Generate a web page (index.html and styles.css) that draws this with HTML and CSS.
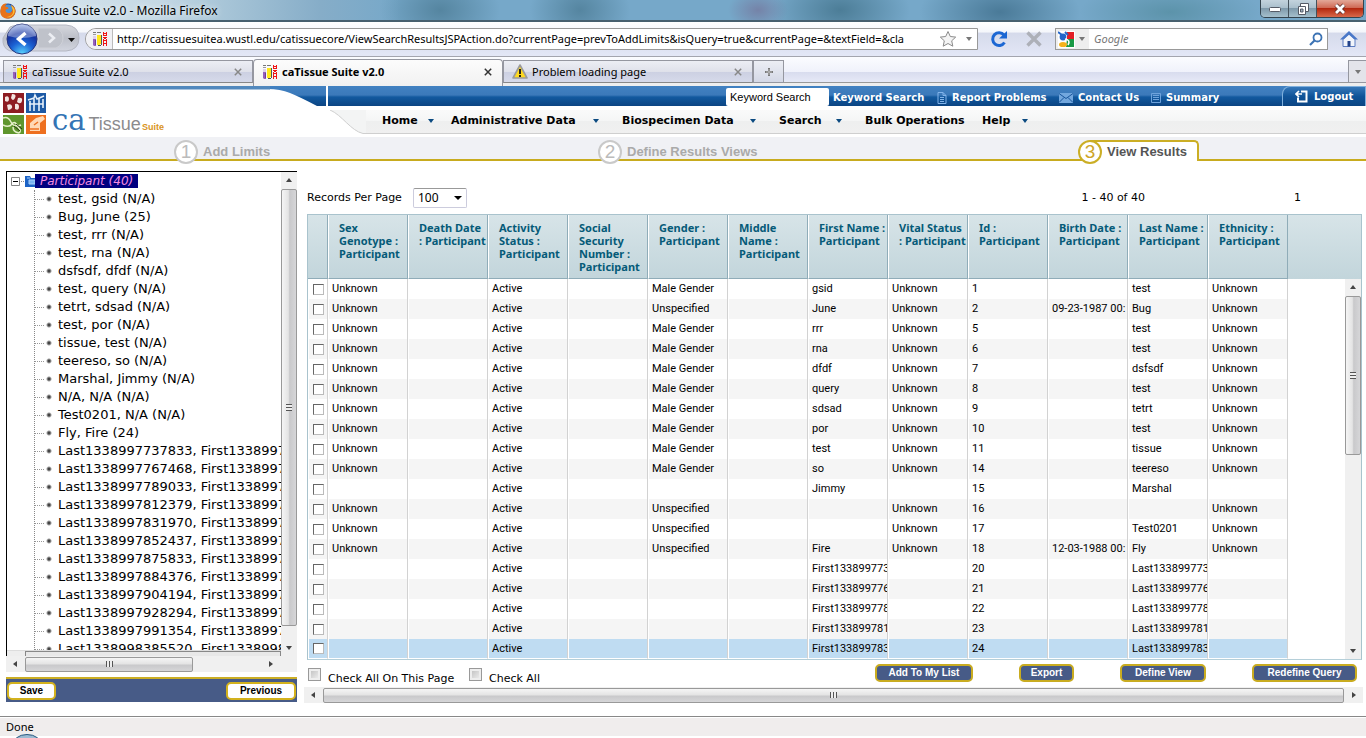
FILE: index.html
```html
<!DOCTYPE html>
<html lang="en">
<head>
<meta charset="utf-8">
<title>caTissue Suite v2.0</title>
<link rel="stylesheet" href="styles.css">
</head>
<body>
<svg class="defs" width="0" height="0" aria-hidden="true">
  <symbol id="tubes" viewBox="0 0 16 16">
    <path d="M1 1.500h3M5 1.500h4" stroke="#777"/><path d="M1 3.500h3" stroke="#999"/>
    <path d="M1 5h3v3h-3z" fill="#ddd0ea"/><path d="M1 8h3v7h-2l-1-1z" fill="#9460bb"/><path d="M3 9h1v5h-1z" fill="#6e3d96"/>
    <path d="M5 4h4v9h-1v1h-3z" fill="#ffe81a"/><path d="M9 4h1v10h-1v1h-3v-1h3z" fill="#555"/>
    <path d="M11 1h1v4h-1zM14 1h1v4h-1zM12 2h2v1h-2zM12 4h2v1h-2zM11 6h4v1h-4zM11 8h1v7h-1zM14 8h1v7h-1zM12 9h2v1h-2zM12 12h2v1h-2zM12 6h2v2h-2z" fill="#f01515"/>
  </symbol>
  <symbol id="cross" viewBox="0 0 8 8"><path d="M.8.8l6.400 6.400M7.200.8l-6.400 6.400" stroke="currentColor" stroke-width="1.500"/></symbol>
  <symbol id="down" viewBox="0 0 6 4"><path d="M0 0h6l-3 4z" fill="currentColor"/></symbol>
  <symbol id="up" viewBox="0 0 6 4"><path d="M0 4h6l-3-4z" fill="currentColor"/></symbol>
  <symbol id="left" viewBox="0 0 4 6"><path d="M4 0v6l-4-3z" fill="currentColor"/></symbol>
  <symbol id="right" viewBox="0 0 4 6"><path d="M0 0v6l4-3z" fill="currentColor"/></symbol>
</svg>

<header class="titlebar">
  <svg class="fox" width="16" height="16" viewBox="0 0 16 16"><circle cx="8" cy="8" r="7.500" fill="#1f4a94"/><circle cx="8" cy="6" r="4.500" fill="#4d93d6"/><path d="M1 4c2-4 5-4 6-3-2 1-2 2-1 3 2 0 3 1 2 2-2 0-3 1-2 3 2 2 5 1 6-1 1-3 0-4-1-6 3 1 5 4 4.500 7-1 5-5 7-9 6.500C2 15-.5 11 .5 7z" fill="#e8731a"/><path d="M11 2c3 2 4 5 3.500 7-1 4-5 6-8 5 5 0 8-4 6-8z" fill="#fbc43a"/></svg>
  <span class="caption">caTissue Suite v2.0 - Mozilla Firefox</span>
  <span class="winbtns">
    <button aria-label="Minimize"><svg width="14" height="8" viewBox="0 0 14 8"><rect x="1.500" y="2.500" width="11" height="4" rx="1" fill="#fff" stroke="#555b66"/></svg></button>
    <button aria-label="Restore"><svg width="14" height="14" viewBox="0 0 14 14"><path d="M4.500 1.500h8v8h-8z" fill="#fff" stroke="#555b66"/><path d="M2.500 4.500h7v8h-7z" fill="#fff" stroke="#555b66"/><path d="M4.500 7h2.500v3h-2.500z" fill="#9fb0c0" stroke="#555b66"/></svg></button>
    <button class="close" aria-label="Close"><svg width="14" height="12" viewBox="0 0 14 12"><path d="M3 2l8 8M11 2l-8 8" stroke="#5b2d2a" stroke-width="4.400"/><path d="M3 2l8 8M11 2l-8 8" stroke="#fff" stroke-width="2.800"/></svg></button>
  </span>
</header>

<div class="navbar">
  <svg width="80" height="32" viewBox="0 0 80 32">
    <defs><radialGradient id="g1" cx=".5" cy="1" r="1"><stop offset="0" stop-color="#5cd8ff"/><stop offset=".4" stop-color="#1b62d4"/><stop offset=".7" stop-color="#1533a0"/><stop offset="1" stop-color="#9cb4ea"/></radialGradient>
    <linearGradient id="g2" x2="0" y2="1"><stop offset="0" stop-color="#d6d8de"/><stop offset=".5" stop-color="#bcbfc8"/><stop offset="1" stop-color="#d2d5df"/></linearGradient></defs>
    <path d="M10 4c4-2 10-2 14-2h42q13 1 13 13t-13 13h-56q-8-3-7-13z" fill="url(#g2)" stroke="#b4b7c2"/>
    <path d="M38 5h18q7 3 7 10t-7 10h-18z" fill="#bfc2ca" stroke="#cfd1d8"/>
    <path d="M49 10.500l5 4.500-5 4.500" stroke="#eceef3" stroke-width="2.500" fill="none"/>
    <circle cx="22" cy="16" r="15" fill="url(#g1)" stroke="#25347c"/><path d="M8 13a14 12 0 0 1 28 0q-14 4-28 0z" fill="#fff" opacity=".35"/>
    <path d="M25.500 10l-7 6 7 6" stroke="#fff" stroke-width="3.400" fill="none"/>
    <path d="M68 15h7l-3.500 4z" fill="#111"/>
  </svg>
  <div class="urlbox">
    <span class="ident"><svg width="16" height="16"><use href="#tubes"/></svg></span>
    <input class="url" aria-label="Address" value="http://catissuesuitea.wustl.edu/catissuecore/ViewSearchResultsJSPAction.do?currentPage=prevToAddLimits&amp;isQuery=true&amp;currentPage=&amp;textField=&amp;cla">
    <svg width="18" height="18" viewBox="0 0 18 18"><path d="M9 1.500l2.300 5 5.400.6-4 3.700 1.100 5.400L9 13.500l-4.800 2.700 1.100-5.400-4-3.700 5.400-.6z" fill="#f4f4f4" stroke="#8b8b8b"/></svg>
    <svg class="gray" width="6" height="4"><use href="#down"/></svg>
  </div>
  <svg class="reload" width="18" height="18" viewBox="0 0 18 18"><path d="M14.500 12.500a6.400 6.400 0 1 1-.5-7.500" fill="none" stroke="#1c67d3" stroke-width="3"/><path d="M17 1v7.500h-8z" fill="#1c67d3"/></svg>
  <svg class="stop" width="18" height="18" viewBox="0 0 18 18"><path d="M2.500 2.500l13 13M15.500 2.500l-13 13" stroke="#adb0b8" stroke-width="3.400"/></svg>
  <div class="searchbox">
    <span class="engine"><svg width="17" height="17" viewBox="0 0 17 17"><path d="M0 0h17v17H0z" fill="#fff"/><path d="M9 1h7v7H9z" fill="#e21f26"/><path d="M9 8h7v8H8z" fill="#1a9a45"/><circle cx="5" cy="6" r="3.400" fill="#2265c9"/><path d="M0 1l4 3M7 1l3 3" stroke="#2265c9" stroke-width="2"/><ellipse cx="5" cy="13.500" rx="4" ry="2.600" fill="#f5b21c"/><path d="M7 8q6 1 3 6" stroke="#fff" stroke-width="1.600" fill="none"/></svg><svg class="gray" width="6" height="4"><use href="#down"/></svg></span>
    <input class="q" aria-label="Search" placeholder="Google">
    <svg width="14" height="14" viewBox="0 0 14 14"><circle cx="8.500" cy="5.500" r="4" fill="#fff" stroke="#3c73b4" stroke-width="1.800"/><path d="M5.500 8.500l-4.500 4.500" stroke="#3c73b4" stroke-width="2.200"/></svg>
  </div>
  <svg class="home" width="18" height="16" viewBox="0 0 18 16"><path d="M3 8.500v7h12v-7l-6-6z" fill="#f2f5fb" stroke="#5c7cc0"/><path d="M9 0l9 8.500h-3.500L9 3.700 3.500 8.500H0z" fill="#4a78c8"/><path d="M7.500 10h3v5.500h-3z" fill="#23438a"/></svg>
</div>

<nav class="tabs" aria-label="Browser tabs">
  <div class="tab"><svg width="16" height="16"><use href="#tubes"/></svg><span>caTissue Suite v2.0</span><svg class="x" width="8" height="8"><use href="#cross"/></svg></div>
  <div class="tab on"><svg width="16" height="16"><use href="#tubes"/></svg><span>caTissue Suite v2.0</span><svg class="x" width="8" height="8"><use href="#cross"/></svg></div>
  <div class="tab"><svg width="16" height="15" viewBox="0 0 16 15"><path d="M8 1l7 13H1z" fill="#ffd91f" stroke="#9a9a9a" stroke-width="1.600" stroke-linejoin="round"/><path d="M8 5v5M8 11v2" stroke="#111" stroke-width="1.800"/></svg><span>Problem loading page</span><svg class="x" width="8" height="8"><use href="#cross"/></svg></div>
  <button class="newtab" aria-label="New tab"><svg width="8" height="8" viewBox="0 0 8 8"><path d="M4 0v8M0 4h8" stroke="#777" stroke-width="2"/><path d="M4 1v6M1 4h6" stroke="#ddd" stroke-width=".6"/></svg></button>
  <button class="alltabs" aria-label="List all tabs"><svg class="gray" width="6" height="4"><use href="#down"/></svg></button>
</nav>

<div class="apphead">
  <div class="brand">
    <svg width="326" height="48" viewBox="0 0 326 48">
      <defs><linearGradient id="bl" gradientUnits="userSpaceOnUse" x2="0" y2="20"><stop offset="0" stop-color="#4181c1"/><stop offset=".45" stop-color="#3b79ba"/><stop offset=".55" stop-color="#12599f"/><stop offset="1" stop-color="#0c4583"/></linearGradient></defs>
      <path d="M0 0h326v20H317Q300 11 290 7t-22-4H0z" fill="url(#bl)"/><path d="M0 0h270v3.500H0z" fill="#5289bd"/>
      <path d="M3 7h21v20H3z" fill="#8e1c22"/><path d="M5 11q4-2 4 2t-4 2zM12 8q5 0 3 4t-4 0zM18 12q5-1 4 3t-5 1zM7 19q4-2 5 1t-4 4zM15 18q4-1 4 3t-4 2z" fill="#f3e4e0"/>
      <path d="M26 7h20v20H26z" fill="#1d5aa5"/><path d="M28 14l6-2 1-3 2 4 7-3M29 18h14M30 15v10M34 13v12M39 12v13M43 13v9" stroke="#e6f0fa" stroke-width="1.600" fill="none"/>
      <path d="M3 29h21v19H3z" fill="#5f962d"/><path d="M3 32q5-2 8 4t10 3M3 39q6 3 9-1t6 3q4 4 1 6-6-1-6-6" stroke="#e5efc9" stroke-width="1.500" fill="none"/><path d="M14 40l6 5M16 38l6 5" stroke="#263d12"/>
      <path d="M26 29h20v19H26z" fill="#ee7020"/><path d="M30 37h10v8H30zM30 37l6-5 7-2 2 3-5 4" fill="#ffd9b5"/><path d="M30 43h9M34 39l4-3" stroke="#ee7020" stroke-width="1.500"/>
    </svg>
    <div class="logo"><span class="ca">ca</span><span class="ti">Tissue</span><span class="su">Suite</span></div>
  </div>
  <div class="rows">
    <div class="toplinks">
      <input class="kw" aria-label="Keyword" value="Keyword Search">
      <a class="t1" href="#">Keyword Search</a>
      <a class="t2" href="#"><svg width="10" height="12" viewBox="0 0 10 12"><path d="M1 .5h5l3 3v8H1zM6 .5v3h3M3 5.500h4M3 7.500h4M3 9.500h4" fill="none" stroke="#82b4ea"/></svg>Report Problems</a>
      <a class="t3" href="#"><svg width="14" height="10" viewBox="0 0 14 10"><path d="M0 0h14v10H0z" fill="#72a7de"/><path d="M0 .5l7 5 7-5M0 9.500l5-5M14 9.500l-5-5" stroke="#17549a" fill="none"/></svg>Contact Us</a>
      <a class="t4" href="#"><svg width="10" height="10" viewBox="0 0 10 10"><path d="M.5.5h9v9h-9zM2 2.500h6M2 4.500h6M2 6.500h6" fill="none" stroke="#6ea3dc"/></svg>Summary</a>
      <a class="logout" href="#"><svg width="14" height="13" viewBox="0 0 14 13"><path d="M6 1.500h5.500v10H3v-4" fill="none" stroke="#fff" stroke-width="2"/><path d="M7 4H2M4 1L1 4l3 3" stroke="#fff" stroke-width="1.600" fill="none"/></svg>Logout</a>
    </div>
    <nav class="menu">
      <svg width="40" height="24" viewBox="0 0 40 24" preserveAspectRatio="none"><path d="M4 0C16 5 25 21 37 23.500H40V0z" fill="#f3f4f4"/><path d="M4 0C16 5 25 21 37 23.500H40" fill="none" stroke="#cfcfcf"/></svg>
      <div class="items">
        <a href="#">Home<svg width="6" height="4"><use href="#down"/></svg></a>
        <a href="#">Administrative Data<svg width="6" height="4"><use href="#down"/></svg></a>
        <a href="#">Biospecimen Data<svg width="6" height="4"><use href="#down"/></svg></a>
        <a href="#">Search<svg width="6" height="4"><use href="#down"/></svg></a>
        <a href="#">Bulk Operations</a>
        <a href="#">Help<svg width="6" height="4"><use href="#down"/></svg></a>
      </div>
    </nav>
  </div>
</div>

<div class="wizard">
  <span></span>
  <div class="step"><b class="num">1</b>Add Limits</div>
  <div class="step"><b class="num">2</b>Define Results Views</div>
  <div class="step cur"><b class="num">3</b><span class="curtab">View Results</span></div>
</div>

<main class="main">
  <section class="side">
    <div class="treebox">
      <div class="treecol">
        <div class="tree">
          <div class="root"><svg width="30" height="18" viewBox="0 0 30 18"><path d="M4.500 5.500h8v8h-8z" fill="#fff" stroke="#848484"/><path d="M6 9.500h5" stroke="#000"/><path d="M14 9.500h4" stroke="#888" stroke-dasharray="1 1"/><path d="M18 4h5l1 2h5v9h-11z" fill="#1c63c6"/><path d="M20 6h3M22 8h6v4h-6z" fill="#7ab4f2" stroke="#a9d0fa"/></svg><span>Participant (40)</span></div>
          <ul>
            <li>test, gsid (N/A)</li><li>Bug, June (25)</li><li>test, rrr (N/A)</li><li>test, rna (N/A)</li><li>dsfsdf, dfdf (N/A)</li><li>test, query (N/A)</li><li>tetrt, sdsad (N/A)</li><li>test, por (N/A)</li><li>tissue, test (N/A)</li><li>teereso, so (N/A)</li><li>Marshal, Jimmy (N/A)</li><li>N/A, N/A (N/A)</li><li>Test0201, N/A (N/A)</li><li>Fly, Fire (24)</li><li>Last1338997737833, First1338997</li><li>Last1338997767468, First1338997</li><li>Last1338997789033, First1338997</li><li>Last1338997812379, First1338997</li><li>Last1338997831970, First1338997</li><li>Last1338997852437, First1338997</li><li>Last1338997875833, First1338997</li><li>Last1338997884376, First1338997</li><li>Last1338997904194, First1338997</li><li>Last1338997928294, First1338997</li><li>Last1338997991354, First1338997</li><li>Last1338998385520, First1338998</li>
          </ul>
        </div>
        <div class="sliver"><i></i></div>
      </div>
      <div class="vs"><svg width="6" height="4"><use href="#up"/></svg><div class="vt long"><i class="grip"></i></div><svg width="6" height="4"><use href="#down"/></svg></div>
    </div>
    <div class="hs"><svg width="4" height="6"><use href="#left"/></svg><div class="ht short"><i class="grip h"></i></div><svg width="4" height="6"><use href="#right"/></svg></div>
    <div class="actions"><button>Save</button><button class="wide">Previous</button></div>
  </section>

  <section class="results">
    <div class="pager">
      <label for="rpp">Records Per Page</label>
      <span class="selwrap"><select id="rpp"><option>100</option></select><svg width="8" height="4" viewBox="0 0 6 4" preserveAspectRatio="none"><path d="M0 0h6l-3 4z"/></svg></span>
      <span class="range">1 - 40 of 40</span><span class="pg">1</span>
    </div>
    <div class="grid">
      <table>
        <colgroup><col class="c0"><col class="c"><col class="c"><col class="c"><col class="c"><col class="c"><col class="c"><col class="c"><col class="c"><col class="c"><col class="c"><col class="c"><col class="c"><col></colgroup>
        <thead><tr><th></th><th>Sex<br>Genotype :<br>Participant</th><th>Death Date<br>: Participant</th><th>Activity<br>Status :<br>Participant</th><th>Social<br>Security<br>Number :<br>Participant</th><th>Gender :<br>Participant</th><th>Middle<br>Name :<br>Participant</th><th>First Name :<br>Participant</th><th>Vital Status<br>: Participant</th><th>Id :<br>Participant</th><th>Birth Date :<br>Participant</th><th>Last Name :<br>Participant</th><th>Ethnicity :<br>Participant</th><th></th></tr></thead>
        <tbody>
<tr><td><input type="checkbox" aria-label="Select 1"></td><td>Unknown</td><td></td><td>Active</td><td></td><td>Male Gender</td><td></td><td>gsid</td><td>Unknown</td><td>1</td><td></td><td>test</td><td>Unknown</td><td></td></tr>
<tr><td><input type="checkbox" aria-label="Select 2"></td><td>Unknown</td><td></td><td>Active</td><td></td><td>Unspecified</td><td></td><td>June</td><td>Unknown</td><td>2</td><td>09-23-1987 00:</td><td>Bug</td><td>Unknown</td><td></td></tr>
<tr><td><input type="checkbox" aria-label="Select 5"></td><td>Unknown</td><td></td><td>Active</td><td></td><td>Male Gender</td><td></td><td>rrr</td><td>Unknown</td><td>5</td><td></td><td>test</td><td>Unknown</td><td></td></tr>
<tr><td><input type="checkbox" aria-label="Select 6"></td><td>Unknown</td><td></td><td>Active</td><td></td><td>Male Gender</td><td></td><td>rna</td><td>Unknown</td><td>6</td><td></td><td>test</td><td>Unknown</td><td></td></tr>
<tr><td><input type="checkbox" aria-label="Select 7"></td><td>Unknown</td><td></td><td>Active</td><td></td><td>Male Gender</td><td></td><td>dfdf</td><td>Unknown</td><td>7</td><td></td><td>dsfsdf</td><td>Unknown</td><td></td></tr>
<tr><td><input type="checkbox" aria-label="Select 8"></td><td>Unknown</td><td></td><td>Active</td><td></td><td>Male Gender</td><td></td><td>query</td><td>Unknown</td><td>8</td><td></td><td>test</td><td>Unknown</td><td></td></tr>
<tr><td><input type="checkbox" aria-label="Select 9"></td><td>Unknown</td><td></td><td>Active</td><td></td><td>Male Gender</td><td></td><td>sdsad</td><td>Unknown</td><td>9</td><td></td><td>tetrt</td><td>Unknown</td><td></td></tr>
<tr><td><input type="checkbox" aria-label="Select 10"></td><td>Unknown</td><td></td><td>Active</td><td></td><td>Male Gender</td><td></td><td>por</td><td>Unknown</td><td>10</td><td></td><td>test</td><td>Unknown</td><td></td></tr>
<tr><td><input type="checkbox" aria-label="Select 11"></td><td>Unknown</td><td></td><td>Active</td><td></td><td>Male Gender</td><td></td><td>test</td><td>Unknown</td><td>11</td><td></td><td>tissue</td><td>Unknown</td><td></td></tr>
<tr><td><input type="checkbox" aria-label="Select 14"></td><td>Unknown</td><td></td><td>Active</td><td></td><td>Male Gender</td><td></td><td>so</td><td>Unknown</td><td>14</td><td></td><td>teereso</td><td>Unknown</td><td></td></tr>
<tr><td><input type="checkbox" aria-label="Select 15"></td><td></td><td></td><td>Active</td><td></td><td></td><td></td><td>Jimmy</td><td></td><td>15</td><td></td><td>Marshal</td><td></td><td></td></tr>
<tr><td><input type="checkbox" aria-label="Select 16"></td><td>Unknown</td><td></td><td>Active</td><td></td><td>Unspecified</td><td></td><td></td><td>Unknown</td><td>16</td><td></td><td></td><td>Unknown</td><td></td></tr>
<tr><td><input type="checkbox" aria-label="Select 17"></td><td>Unknown</td><td></td><td>Active</td><td></td><td>Unspecified</td><td></td><td></td><td>Unknown</td><td>17</td><td></td><td>Test0201</td><td>Unknown</td><td></td></tr>
<tr><td><input type="checkbox" aria-label="Select 18"></td><td>Unknown</td><td></td><td>Active</td><td></td><td>Unspecified</td><td></td><td>Fire</td><td>Unknown</td><td>18</td><td>12-03-1988 00:</td><td>Fly</td><td>Unknown</td><td></td></tr>
<tr><td><input type="checkbox" aria-label="Select 20"></td><td></td><td></td><td>Active</td><td></td><td></td><td></td><td>First133899773</td><td></td><td>20</td><td></td><td>Last133899773</td><td></td><td></td></tr>
<tr><td><input type="checkbox" aria-label="Select 21"></td><td></td><td></td><td>Active</td><td></td><td></td><td></td><td>First133899776</td><td></td><td>21</td><td></td><td>Last133899776</td><td></td><td></td></tr>
<tr><td><input type="checkbox" aria-label="Select 22"></td><td></td><td></td><td>Active</td><td></td><td></td><td></td><td>First133899778</td><td></td><td>22</td><td></td><td>Last133899778</td><td></td><td></td></tr>
<tr><td><input type="checkbox" aria-label="Select 23"></td><td></td><td></td><td>Active</td><td></td><td></td><td></td><td>First133899781</td><td></td><td>23</td><td></td><td>Last133899781</td><td></td><td></td></tr>
<tr class="sel"><td><input type="checkbox" aria-label="Select 24"></td><td></td><td></td><td>Active</td><td></td><td></td><td></td><td>First133899783</td><td></td><td>24</td><td></td><td>Last133899783</td><td></td><td></td></tr>
        </tbody>
      </table>
      <div class="vs"><svg width="6" height="4"><use href="#up"/></svg><div class="vt mid"><i class="grip"></i></div><svg width="6" height="4"><use href="#down"/></svg></div>
    </div>
    <div class="foot">
      <label class="all"><input type="checkbox">Check All On This Page</label>
      <label><input type="checkbox">Check All</label>
      <div class="btns"><button class="b1">Add To My List</button><button class="b2">Export</button><button class="b3">Define View</button><button class="b4">Redefine Query</button></div>
    </div>
    <div class="hs"><svg width="4" height="6"><use href="#left"/></svg><div class="ht"><i class="grip h"></i></div><svg width="4" height="6"><use href="#right"/></svg></div>
  </section>
</main>

<footer class="status">Done<svg width="32" height="4" viewBox="0 0 32 4"><ellipse cx="16" cy="12" rx="15" ry="11.500" fill="#9dbbd2" stroke="#2c5a80"/></svg></footer>
</body>
</html>
```

FILE: styles.css
```css
* { box-sizing: border-box; }
body { margin: 0; min-height: 100vh; display: flex; flex-direction: column; background: #fff; color: #000; font: 12px/16px "Noto Sans", sans-serif; overflow: hidden; }
button, input, select { font: inherit; color: inherit; margin: 0; padding: 0; border: 0; background: none; }
svg { flex: none; display: block; }
a { color: inherit; text-decoration: none; }
.defs { position: absolute; }
.gray { color: #777; }

.titlebar { display: flex; height: 22px; padding-right: 2px; gap: 5px; border-bottom: 2px solid #47606f; background:
  linear-gradient(90deg, #dce8f0 0, #c4d8e4 160px, #a9c6d8 220px, #86adc8 320px, transparent 400px),
  radial-gradient(60px 40px at 440px 10px, #5585a0, transparent),
  radial-gradient(50px 40px at 580px 10px, #5585a0, transparent),
  radial-gradient(30px 20px at 758px 10px, #7583a8, transparent),
  radial-gradient(70px 40px at 840px 10px, #4c7d97, transparent),
  radial-gradient(80px 40px at 1000px 12px, #4a7a98, transparent),
  radial-gradient(90px 30px at 1170px 12px, #5c93aa, transparent), #76a8c9; }
.fox { margin-top: 3px; }
.caption { padding-top: 3px; text-shadow: 0 0 6px #fff; }
.winbtns { margin-left: auto; display: flex; height: 18px; border: 1px solid #33434e; border-top: 0; border-radius: 0 0 5px 5px; overflow: hidden; }
.winbtns button { width: 28px; display: grid; place-items: center; border-right: 1px solid #44525c; background: linear-gradient(#c3d3dd, #aabfcc 45%, #7f9aab 50%, #a5bfcc); }
.winbtns .close { width: 46px; border: 0; background: linear-gradient(#e3a898, #cf6a55 45%, #b3280f 50%, #d8694a); }

.navbar { display: flex; align-items: center; height: 35px; padding-right: 8px; border-bottom: 1px solid #a3a5ae; background: linear-gradient(#fff 0, #f4f6fb 30%, #d5daeb 32%, #e3e7f6); }
.urlbox { flex: 1; display: flex; align-items: center; height: 22px; margin-left: 5px; padding-right: 5px; gap: 9px; border: 1px solid #999; border-radius: 11px 0 0 11px; background: #fff; }
.ident { display: flex; align-items: center; align-self: stretch; padding: 0 4px 0 6px; border-right: 1px solid #bbb; border-radius: 11px 0 0 11px; background: #f1f1f5; }
.url { flex: 1; min-width: 0; margin: 0 -5px; font-size: 11px; }
.reload { margin-left: 12px; }
.stop { margin: 0 12px 0 17px; }
.searchbox { display: flex; align-items: center; width: 273px; height: 22px; padding-right: 4px; border: 1px solid #999; background: #fff; }
.engine { display: flex; align-items: center; align-self: stretch; gap: 4px; padding: 0 4px 0 2px; background: #eee; }
.q { flex: 1; min-width: 0; padding-left: 5px; font-size: 11px; font-style: italic; }
.q::placeholder { color: #777; opacity: 1; }
.home { margin-left: 12px; }

.tabs { display: flex; align-items: flex-end; height: 29px; padding-left: 3px; background: linear-gradient(#fbfcff 0, #f0f2fb 50%, #d8dcee 52%, #e6e9f7 86%, #999 86%, #999 90%, #eee 90%); font-size: 11px; }
.tab { display: flex; align-items: center; width: 250px; height: 23px; margin-bottom: 3px; padding: 0 10px 0 8px; gap: 4px; border: 1px solid #9597a0; border-bottom-color: #888; background: linear-gradient(#eceef4, #dfe1ea 50%, #ccd0e2 52%, #d6daea); }
.tab.on { height: 27px; margin-bottom: 0; padding-bottom: 2px; border-bottom: 0; border-radius: 4px 4px 0 0; background: linear-gradient(#fcfcfc, #f1f1f1); font-weight: bold; }
.x { margin-left: auto; color: #888; }
.on .x { color: #333; }
.newtab { width: 31px; height: 23px; margin-bottom: 3px; border: 1px solid #9597a0; display: grid; place-items: center; background: linear-gradient(#eceef4, #d4d8e6); }
.alltabs { width: 18px; height: 23px; margin: 0 0 3px auto; border: 1px solid #9597a0; border-right: 0; display: grid; place-items: center; background: #e3e4ea; }

.apphead { display: flex; height: 51px; }
.brand { display: grid; width: 326px; }
.brand > * { grid-area: 1 / 1; }
.logo { display: flex; align-items: baseline; padding: 18px 0 0 52px; line-height: 32px; font-family: "Liberation Sans", Arial, sans-serif; }
.ca { font: 29px/32px "DejaVu Serif", serif; color: #3474b5; }
.ti { font-size: 18px; color: #8b8b8d; margin-left: 3px; }
.su { font-size: 9px; font-weight: bold; color: #d9941c; margin-left: 1px; }
.rows { flex: 1; }
.toplinks { display: flex; height: 20px; padding-left: 398px; border-left: 2px solid #fff; background: linear-gradient(#4181c1 0, #3b79ba 45%, #12599f 55%, #0c4583); color: #fff; font: bold 10px/16px "DejaVu Sans", sans-serif; white-space: nowrap; }
.toplinks a { display: flex; align-items: center; gap: 5px; padding-top: 4px; }
.kw { width: 103px; height: 18px; margin: 2px 4px 0 0; padding-left: 4px; border-radius: 2px; background: #fff; color: #000; font: 11px/16px "Liberation Sans", Arial, sans-serif; }
.toplinks .t1 { width: 104px; }
.toplinks .t2 { width: 122px; }
.toplinks .t3 { width: 92px; }
.toplinks .logout { margin-left: auto; width: 84px; padding: 0 0 0 12px; border: 1px solid #7fb0dd; border-bottom: 0; border-radius: 8px 0 0 0; background: linear-gradient(#3577b8, #0f5398 50%, #0c4583); }
.menu { display: flex; height: 24px; margin-top: 4px; }
.items { flex: 1; display: grid; grid-template-columns: 69px 171px 157px 86px 117px 1fr; padding-left: 16px; border-bottom: 1px solid #cfcfcf; background: linear-gradient(#fafafa, #f5f6f6 45%, #eeefef 50%, #f0f0f0); font: bold 11px/20px "DejaVu Sans", sans-serif; white-space: nowrap; }
.items a { display: flex; align-items: center; justify-content: space-between; padding: 0 23px 2px 0; }
.items a:first-child { padding-right: 17px; }
.items a:last-child { justify-content: flex-start; gap: 12px; }
.items svg { color: #0b4a80; }

.wizard { display: grid; grid-template-columns: 174fr 424fr 480fr 288fr; height: 27px; padding-top: 3px; background: linear-gradient(#f0f1f5 22px, #c8ab1e 22px, #c8ab1e 24px, #fff 24px); color: #aaa; font: bold 13px/24px "Liberation Sans", Arial, sans-serif; }
.step { display: flex; gap: 5px; }
.num { width: 24px; height: 24px; border: 2px solid #c9c9c9; border-radius: 12px; background: #fff; text-align: center; font-weight: normal; font-size: 19px; line-height: 20px; color: #bbb; }
.cur { color: #555; }
.cur .num { border-color: #cbae25; color: #cda428; z-index: 1; }
.curtab { height: 21px; margin-left: -17px; padding: 0 10px 0 17px; border: solid #cbae25; border-width: 2px 2px 0 0; border-radius: 0 5px 0 0; background: #fff; line-height: 20px; }

.main { flex: 1; display: flex; gap: 7px; padding: 7px 3px 12px 6px; font-family: "DejaVu Sans", sans-serif; }
.side { width: 291px; display: flex; flex-direction: column; padding-bottom: 2px; }
.treebox { flex: 1 1 0; min-height: 0; display: flex; border-top: 1px solid #000; border-left: 1px solid #000; }
.treecol { flex: 1; min-width: 0; display: flex; flex-direction: column; }
.tree { flex: 1 1 0; min-height: 0; overflow: hidden; font-size: 13px; line-height: 18px; white-space: nowrap; }
.root { display: flex; font-size: 12px; font-style: italic; color: #f58be0; }
.root span { display: block; margin: 2px 0 0 -2px; padding: 0 5px; height: 14px; line-height: 14px; background: #000080; }
.tree ul { list-style: none; margin: 0 0 0 27px; padding: 0; border-left: 1px dotted #888; }
.tree li { padding-left: 23px; background: radial-gradient(circle at 14px 9px, #444 0 1px, transparent 3px), repeating-linear-gradient(90deg, #999 0 1px, #fff 1px 2px) 0 9px / 9px 1px no-repeat; }
.sliver { height: 6px; padding-left: 18px; background: #eee; border-top: 1px solid #ddd; }
.sliver i { display: block; height: 5px; border: 1px solid #888; border-bottom: 0; background: #e8e8e8; }
.vs { width: 16px; display: flex; flex-direction: column; align-items: center; padding: 6px 0; background: #f0f0f0; color: #444; }
.vt { width: 16px; margin: 7px 0; display: grid; place-items: center; border: 1px solid #999; border-radius: 2px; background: linear-gradient(90deg, #f5f5f5, #e4e4e4 45%, #c9c9cb 55%, #d6d6d8); }
.vt.long { flex: 1; margin-bottom: 20px; }
.vt.mid { height: 159px; margin-bottom: auto; }
.grip { width: 6px; height: 7px; background: repeating-linear-gradient(#555 0 1px, #eee 1px 3px); }
.grip.h { width: 7px; height: 6px; background: repeating-linear-gradient(90deg, #555 0 1px, #eee 1px 3px); }
.hs { display: flex; align-items: center; height: 16px; padding: 0 7px; background: #f0f0f0; color: #444; }
.ht { flex: 1; height: 15px; margin: 0 8px; display: grid; place-items: center; border: 1px solid #999; border-radius: 2px; background: linear-gradient(#f5f5f5, #e4e4e4 45%, #c9c9cb 55%, #d6d6d8); }
.ht.short { flex: 0 0 168px; margin-right: auto; }
.side .hs { padding-right: 24px; }
.actions { display: flex; justify-content: space-between; align-items: center; margin-top: 5px; padding: 1px; height: 25px; border-top: 2px solid #cbae25; background: #475b87; font: bold 10px/14px "Liberation Sans", Arial, sans-serif; }
.actions button { width: 49px; height: 18px; border: 2px solid #d3b21d; border-radius: 5px; background: #fff; }
.actions .wide { width: 70px; }

.results { flex: 1; min-width: 0; }
.pager { display: flex; align-items: center; height: 43px; padding: 11px 62px 0 3px; font-size: 11px; }
.pager label { min-width: 101px; }
.selwrap { display: grid; align-items: center; margin-left: 5px; }
.selwrap > * { grid-area: 1 / 1; }
.selwrap svg { margin-left: 41px; pointer-events: none; }
.selwrap select { appearance: none; width: 54px; height: 20px; padding-left: 4px; border: 1px solid #ccd; border-top-color: #999; border-radius: 2px; font: 12px/18px "Noto Sans", sans-serif; }
.range { margin-left: auto; }
.pg { margin-left: 149px; }
.grid { display: flex; margin-left: 3px; margin-right: 1px; border: 1px solid #a9c3cd; border-bottom-color: #b5cfd9; background: linear-gradient(#d7e4e8, #c2d5db) 0 0 / 100% 64px no-repeat; font-family: Roboto, sans-serif; font-size: 11px; }
.grid table { flex: 1; width: 100%; min-width: 0; table-layout: fixed; border-collapse: separate; border-spacing: 0; }
.c0 { width: 20px; }
.c { width: 80px; }
th { height: 64px; padding: 6px 0 0 10px; vertical-align: top; text-align: left; font-family: "Noto Sans", sans-serif; line-height: 13px; color: #055a78; white-space: nowrap; border-right: 1px solid #8facb8; border-bottom: 1px solid #8facb8; border-left: 1px solid #fff; overflow: hidden; }
th:first-child { border-left: 0; padding: 0; }
th:last-child { border: 0; }
td { height: 20px; padding: 0 0 0 3px; line-height: 18px; white-space: nowrap; overflow: hidden; border-right: 1px solid #d2d2d2; border-left: 1px solid #fff; background: #fff; }
td:first-child { padding-left: 4px; }
td:last-child { border-right: 0; }
tbody tr:nth-child(even) td:not(:last-child) { background: #f5f5f5; }
tbody tr.sel td:not(:last-child) { background: #bfdcf2; border-bottom: 1px solid #fff; }
input[type=checkbox] { appearance: none; display: block; width: 11px; height: 11px; border: 1px solid #666; border-right-color: #bbb; border-bottom-color: #bbb; background: #fff; }
.grid .vs { margin-top: 64px; }
.foot { display: flex; height: 27px; padding: 0 6px 0 4px; font-size: 11px; }
.foot label { display: flex; gap: 7px; padding-top: 11px; }
.foot .all { min-width: 161px; }
.foot input[type=checkbox] { width: 13px; height: 13px; margin-top: -3px; border: 1px solid #999; background: linear-gradient(135deg, #bbb, #f4f4f4); box-shadow: inset 0 0 0 2px #eee; }
.btns { display: flex; margin-left: auto; padding-top: 4px; gap: 46px; font: bold 10px/14px "Liberation Sans", Arial, sans-serif; color: #fff; }
.btns button { height: 18px; border: 2px solid #c9ac20; border-radius: 5px; background: #475b87; }
.b1 { width: 98px; } .b2 { width: 55px; } .b3 { width: 86px; } .b4 { width: 105px; }

.status { position: relative; height: 22px; padding: 2px 6px; border-top: 1px solid #888; background: linear-gradient(#fff 1px, #f0eded 1px, #f0eded 19px, #fff 19px); font-size: 11px; }
.status svg { position: absolute; left: 11px; bottom: 0; }
```
